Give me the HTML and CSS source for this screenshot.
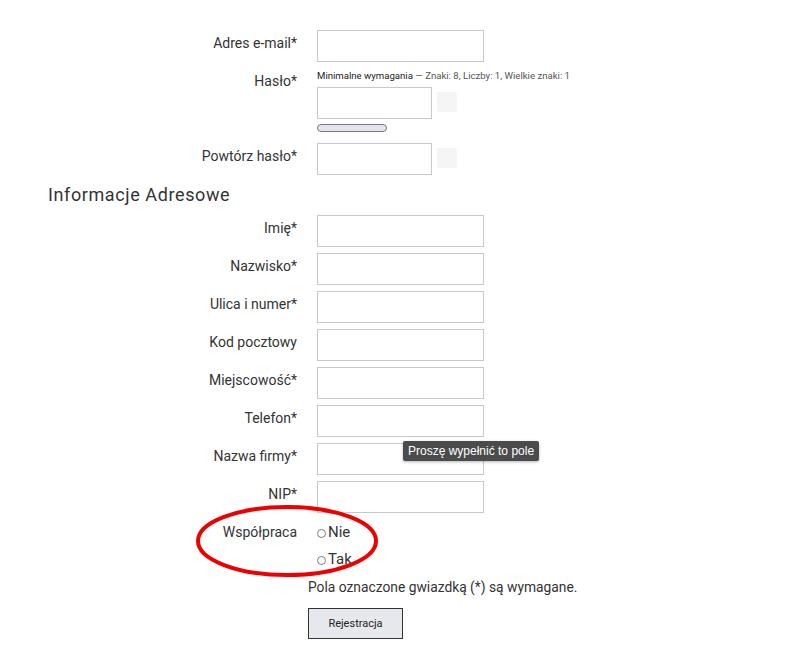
FILE: index.html
```html
<!DOCTYPE html>
<html lang="pl">
<head>
    <meta charset="UTF-8">
    <meta name="viewport" content="width=device-width, initial-scale=1.0">
    <title>Rejestracja</title>
    <link rel="stylesheet" href="styles.css">
</head>
<body>
    <form class="page">
        <div class="row">
            <label for="email">Adres e-mail*</label>
            <input type="text" id="email" class="field">
        </div>
        <div class="row row-pass">
            <label for="pass">Hasło*</label>
            <div class="pass-block">
                <div class="hint"><span class="hint-title">Minimalne wymagania</span> — Znaki: 8, Liczby: 1, Wielkie znaki: 1</div>
                <div class="pass-line">
                    <input type="password" id="pass" class="field short">
                    <span class="eye"></span>
                </div>
                <div class="strength"></div>
            </div>
        </div>
        <div class="row">
            <label for="pass2">Powtórz hasło*</label>
            <div class="pass-line">
                <input type="password" id="pass2" class="field short">
                <span class="eye"></span>
            </div>
        </div>

        <h2 class="section">Informacje Adresowe</h2>

        <div class="row">
            <label for="fname">Imię*</label>
            <input type="text" id="fname" class="field">
        </div>
        <div class="row">
            <label for="lname">Nazwisko*</label>
            <input type="text" id="lname" class="field">
        </div>
        <div class="row">
            <label for="street">Ulica i numer*</label>
            <input type="text" id="street" class="field">
        </div>
        <div class="row">
            <label for="zip">Kod pocztowy</label>
            <input type="text" id="zip" class="field">
        </div>
        <div class="row">
            <label for="city">Miejscowość*</label>
            <input type="text" id="city" class="field">
        </div>
        <div class="row">
            <label for="phone">Telefon*</label>
            <input type="text" id="phone" class="field">
        </div>
        <div class="row">
            <label for="company">Nazwa firmy*</label>
            <input type="text" id="company" class="field">
        </div>
        <div class="row">
            <label for="nip">NIP*</label>
            <input type="text" id="nip" class="field">
        </div>
        <div class="row">
            <label>Współpraca</label>
            <div class="radios">
                <label class="option"><input type="radio" name="coop" value="0">Nie</label>
                <label class="option"><input type="radio" name="coop" value="1">Tak</label>
            </div>
        </div>

        <div class="footer">
            <p class="note">Pola oznaczone gwiazdką (*) są wymagane.</p>
            <button type="button" class="submit">Rejestracja</button>
        </div>

        <div class="tooltip">Proszę wypełnić to pole</div>

        <svg class="marker" width="192" height="80" viewBox="0 0 192 80">
            <ellipse cx="95" cy="37" rx="89" ry="34" fill="none" stroke="#ee0000" stroke-width="4"/>
        </svg>
    </form>
</body>
</html>
```

FILE: styles.css
```css
body {
    margin: 0;
    font-family: Roboto, "Liberation Sans", sans-serif;
    color: #333;
    background: #fff;
}
.page {
    position: relative;
    padding-top: 30px;
    margin: 0;
}
.row {
    display: grid;
    grid-template-columns: 297px 1fr;
    column-gap: 20px;
    margin-bottom: 6px;
}
.row > label {
    text-align: right;
    font-size: 14px;
    line-height: 20px;
    padding-top: 3px;
}
.field {
    display: block;
    box-sizing: border-box;
    width: 167px;
    height: 32px;
    margin: 0;
    border: 1px solid #c8c8c8;
    background: #fff;
}
.field.short {
    width: 115px;
}
.pass-line {
    display: flex;
    align-items: flex-start;
    gap: 5px;
}
.eye {
    width: 20px;
    height: 20px;
    margin-top: 5px;
    background: #f5f5f5;
    border-radius: 2px;
}
.hint {
    font-size: 9.6px;
    line-height: 14px;
    margin-top: 1px;
    margin-bottom: 4px;
    color: #555;
    white-space: nowrap;
}
.hint-title {
    color: #222;
}
.strength {
    box-sizing: border-box;
    width: 70px;
    height: 8px;
    margin-top: 5px;
    margin-bottom: 5px;
    border: 1px solid #777788;
    border-radius: 4px;
    background: #e4e4ea;
}
.section {
    margin: 8px 0 8px 48px;
    font-size: 18px;
    line-height: 24px;
    font-weight: 400;
    letter-spacing: 0.6px;
    color: #333;
}
.radios {
    display: flex;
    flex-direction: column;
    gap: 7px;
    padding-top: 3px;
}
.option {
    display: flex;
    align-items: center;
    font-size: 15px;
    line-height: 20px;
}
.option input {
    appearance: none;
    width: 9px;
    height: 9px;
    margin: 3px 2px 0 0;
    border: 1px solid #7a7a85;
    border-radius: 50%;
    background: #fff;
}
.footer {
    margin-left: 308px;
}
.note {
    margin: 8px 0 11px;
    font-size: 13.8px;
    line-height: 20px;
}
.submit {
    width: 95px;
    height: 31px;
    border: 1px solid #333;
    background: #e7e8ed;
    font-family: Roboto, sans-serif;
    font-size: 11px;
    color: #222;
    padding: 0;
}
.tooltip {
    position: absolute;
    top: 441px;
    left: 403px;
    padding: 2px 5px;
    background: #4b4b4b;
    color: #fff;
    font-family: "Liberation Sans", Arial, sans-serif;
    font-size: 12px;
    line-height: 16px;
    border-radius: 2px;
    box-shadow: 0 1px 3px rgba(0, 0, 0, 0.3);
    white-space: nowrap;
}
.marker {
    position: absolute;
    top: 504px;
    left: 192px;
    pointer-events: none;
}
```
